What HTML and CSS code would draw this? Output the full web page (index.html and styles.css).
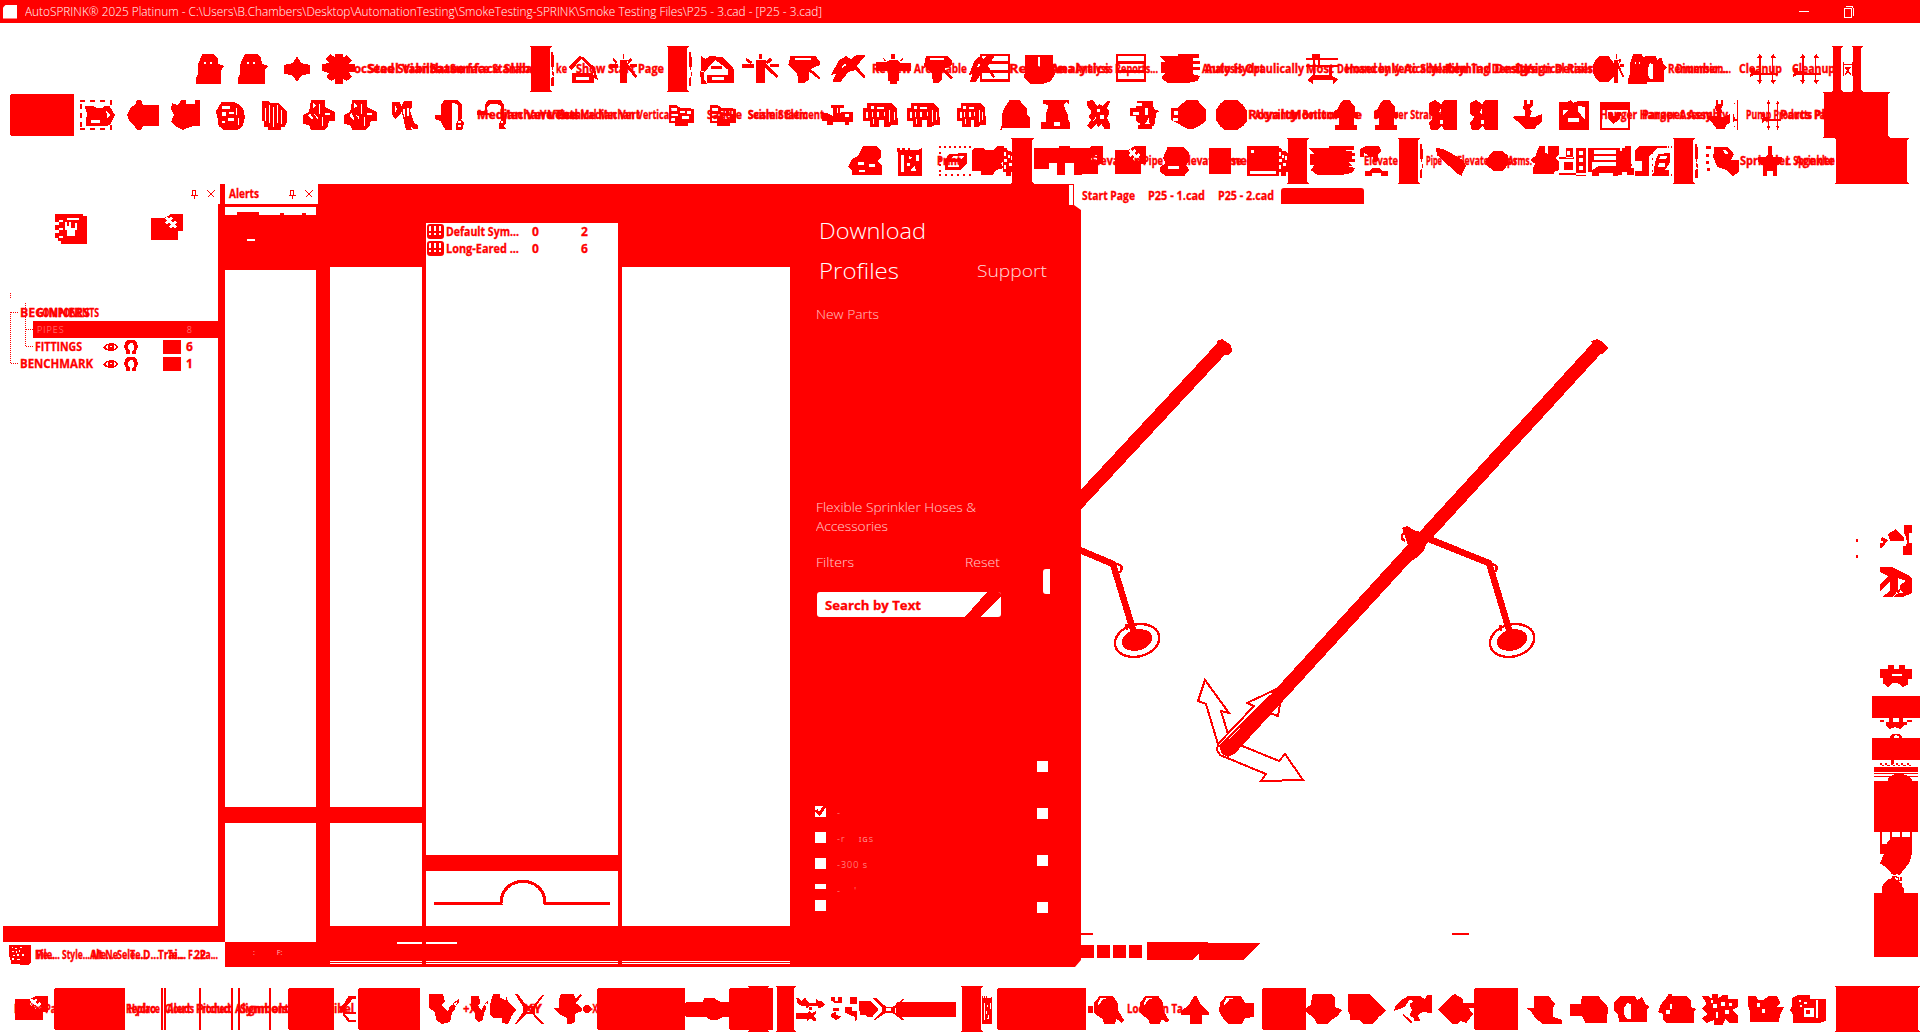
FILE: index.html
```html
<!DOCTYPE html>
<html lang="en">
<head>
<meta charset="utf-8">
<title>AutoSPRINK</title>
<link rel="stylesheet" href="styles.css">
</head>
<body>
<header class="titlebar">
  <span class="app-icon"></span>
  <span class="app-title" data-fit="797">AutoSPRINK® 2025 Platinum - C:\Users\B.Chambers\Desktop\AutomationTesting\SmokeTesting-SPRINK\Smoke Testing Files\P25 - 3.cad - [P25 - 3.cad]</span>
  <svg class="win" width="60" height="14" viewBox="0 0 60 14"><path d="M0 6.500h10M47 1.500h6l1.500 2v7M45.500 4.500q0-1 1-1h5q1 0 1 1v7q0 1-1 1h-5q-1 0-1-1z"/></svg>
</header>
<div class="menu-space"></div>
<div class="toolbar" id="row1"></div>
<div class="toolbar" id="row2"></div>
<div class="toolbar" id="row3"></div>

<main class="work">
  <section class="layers">
    <div class="caption"><svg width="26" height="10" viewBox="0 0 26 10"><path class="line" d="M2.500 1v5M5.500 1v5M2 1.500h4M1 6.500h7M4.500 7v3M17.500 1.500l7 7M24.500 1.500l-7 7"/></svg></div>
    <div class="layer-tools" id="layerTools"></div>
    <div class="tree">
      <svg class="tree-lines" width="34" height="78" viewBox="0 0 34 78"><path class="dots" d="M10.500 0v5M10.500 19v51M11 19.500h8M11 70.500h8M25.500 10v44M26 36.500h8M26 53.500h8"/></svg>
      <div class="tree-rows">
        <div class="node root"><span class="stack"><b data-fit="70">BEGINNERS</b><b data-fit="62">COMPONENTS</b></span></div>
        <div class="node picked"><i>PIPES</i><i class="count">8</i></div>
        <div class="node leaf"><b data-fit="47">FITTINGS</b><span class="marks"></span><span class="swatch"></span><b>6</b></div>
        <div class="node root"><b data-fit="73">BENCHMARK</b><span class="marks"></span><span class="swatch"></span><b>1</b></div>
      </div>
    </div>
    <div class="layers-foot"></div>
    <div class="filters" id="filters"></div>
  </section>

  <section class="dock">
    <div class="alerts">
      <div class="alerts-head"><b data-fit="30">Alerts</b><svg width="26" height="10" viewBox="0 0 26 10"><path class="line" d="M2.500 1v5M5.500 1v5M2 1.500h4M1 6.500h7M4.500 7v3M17.500 1.500l7 7M24.500 1.500l-7 7"/></svg></div>
      <div class="alerts-line"></div>
      <div class="alerts-tools"></div>
      <div class="cell alerts-list"></div>
      <div class="cell alerts-detail"></div>
      <div class="tiny"><i>:</i><i>F:</i></div>
    </div>
    <div class="middle">
      <div class="cols">
        <div class="col first"><div class="cell top"></div><div class="cell grow"></div></div>
        <div class="col symbols">
          <div class="cell list">
            <div class="sym"><span class="sym-icon"></span><b data-fit="73">Default Sym...</b><b class="a">0</b><b>2</b></div>
            <div class="sym"><span class="sym-icon"></span><b data-fit="73">Long-Eared ...</b><b class="a">0</b><b>6</b></div>
          </div>
          <div class="cell grow"><svg width="192" height="55" viewBox="0 0 192 55"><path class="arc" d="M8 32.500H75C75 3 119 3 119 32.500H184"/></svg></div>
        </div>
        <div class="col last"><div class="cell grow"></div></div>
      </div>
      <div class="strip"><span class="dash"></span><span class="rule"></span><span class="rule"></span></div>
    </div>
    <div class="parts">
      <div class="tab-edge"></div>
      <h1 data-fit="107">Download</h1>
      <div class="split"><h1 data-fit="80">Profiles</h1><h2 data-fit="70">Support</h2></div>
      <p class="new" data-fit="63">New Parts</p>
      <p class="hoses"><span data-fit="160">Flexible Sprinkler Hoses &amp;</span><span data-fit="72">Accessories</span></p>
      <div class="filter-head"><span data-fit="38">Filters</span><span data-fit="35">Reset</span><span class="thumb"></span></div>
      <div class="search"><b data-fit="96">Search by Text</b><svg width="36" height="25" viewBox="0 0 36 25"><path d="M22 0h14v4L16 25H0z"/></svg></div>
      <div class="checks">
        <div class="left">
          <label><span class="box"><svg width="11" height="11" viewBox="0 0 11 11"><path class="tick" d="M1 4l3.500 4L10 0"/></svg></span><i>-</i></label>
          <label><span class="box"></span><i>-r&nbsp; &nbsp; ɪɢs</i></label>
          <label><span class="box"></span><i>-300 s</i></label>
          <label class="short"><span class="box"></span><i>-&nbsp; &nbsp; '</i></label>
          <label><span class="box"></span></label>
        </div>
        <div class="right"><span class="box"></span><span class="box"></span><span class="box"></span><span class="box"></span></div>
      </div>
    </div>
  </section>

  <section class="view">
    <nav class="tabs"><b data-fit="53">Start Page</b><b data-fit="57">P25 - 1.cad</b><b data-fit="56">P25 - 2.cad</b><span class="current"></span></nav>
    <div class="canvas">
      <svg width="791" height="779" viewBox="1081 207 791 779">
        <g class="pipe"><path d="M1222 348L1060 522M1597 348L1229 750"/></g>
        <path d="M1217 341l5-2 9 6 1 6-4 4-9-1zM1591 341l6-2 6 3 5 6-6 6-7-2zM1402 528l5-2 9 5 6 1 8 4-6 14-8 8-8 5-6-4 6-8 0-6z"/>
        <g class="branch"><path d="M1075 548L1113 564L1134 633M1424 537L1489 563L1510 633"/></g>
        <path class="line2" d="M1115 564q6 0 7 4l-2 5M1490 564q6 0 7 4l-2 4M1404 533q-5 5 1 8M1127 624q-2 3 1 6M1501 625q-2 3 1 6"/>
        <ellipse cx="1137" cy="640" rx="15.500" ry="10.500" transform="rotate(-14 1137 640)"/>
        <ellipse cx="1512" cy="640" rx="15.500" ry="10.500" transform="rotate(-14 1512 640)"/>
        <ellipse class="line2" cx="1137" cy="640.500" rx="22.500" ry="16" transform="rotate(-14 1137 640)"/>
        <ellipse class="line2" cx="1512" cy="640.500" rx="22.500" ry="16" transform="rotate(-14 1512 640)"/>
        <path class="line1" d="M1228 734L1221 711 1229 713 1205 680 1198 701 1206 704 1218 744 1254 706 1247 703 1283 686 1278 716 1270 713 1240 745 1279 761 1285 754 1303 780 1261 781 1266 774 1220 755 1217 750 1218 744M1222 744l48-48M1236 746l30-30"/>
        <path d="M1219 745l6-6h12v10l-3 5-6 3-6-3z"/>
        <path d="M1081 933h12v2h-12zM1452 933h17v2h-17zM1856 539h2v3h-2zM1856 555h2v3h-2z"/>
        <path d="M1081 945h13v13h-13zM1097 945h13v13h-13zM1113 945h13v13h-13zM1129 945h13v13h-13zM1147 942h61v1h52l-16 17h-45v-7l-6 7h-46z"/>
      </svg>
      <aside class="rail" id="rail"></aside>
    </div>
  </section>
</main>
<div class="toolbar" id="row4"></div>
<script src="app.js"></script>
</body>
</html>
```
FILE: styles.css
```css
* { box-sizing: border-box; }
body {
  margin: 0; width: 1920px; height: 1032px; overflow: hidden;
  background: #fff; color: #f00;
  font: 12px/14px "Open Sans", "Noto Sans", sans-serif;
  display: flex; flex-direction: column;
}
svg { display: block; flex: none; fill: #f00; shape-rendering: crispEdges; overflow: visible; }
svg text { font-family: "Open Sans", "Noto Sans", sans-serif; stroke: #f00; stroke-width: .4; }
i { font-style: normal; }
b { font-weight: 700; -webkit-text-stroke: .3px #f00; }
h1, h2, p { margin: 0; font-weight: 300; }
[data-fit] { white-space: nowrap; flex: none; display: block; transform-origin: 0 50%; }

.titlebar { height: 23px; background: #f00; display: flex; align-items: center; flex: none; color: #fff; }
.app-icon { width: 14px; height: 14px; background: #fff; margin: 0 8px 0 3px; clip-path: polygon(3px 0, 100% 0, 100% 100%, 0 100%, 0 3px); }
.app-title { font-weight: 300; font-size: 12px; }
.win { margin-left: auto; margin-right: 61px; }
.win path { fill: none; stroke: #fff; }
.menu-space { height: 23px; flex: none; }
.toolbar { height: 46px; display: flex; align-items: center; flex: none; }
.toolbar > *, .rail > *, .layer-tools > *, .filters > * { flex: none; }

.work { height: 802px; display: flex; flex: none; }
.layers { width: 218px; display: flex; flex-direction: column; flex: none; }
.caption { height: 20px; padding: 5px 0 0 190px; }
.line { fill: none; stroke: #f00; stroke-width: 1.3; }
.layer-tools { height: 60px; margin-top: 10px; display: flex; align-items: flex-start; }
.tree { display: flex; margin-top: 19px; height: 90px; }
.tree-lines { margin-right: -34px; }
.dots { fill: none; stroke: #f00; stroke-dasharray: 1 1; }
.tree-rows { padding-top: 11px; width: 218px; flex: none; }
.node { height: 17px; display: flex; align-items: center; }
.node.root { padding-left: 20px; }
.node.leaf { padding-left: 35px; }
.node.picked { margin-left: 33px; width: 187px; background: #f00; color: #fff; font-weight: 300; padding: 0 27px 0 4px; justify-content: space-between; font-size: 9px; letter-spacing: 1px; }
.node.picked i { opacity: .55; }
.stack { display: grid; }
.stack b { grid-area: 1 / 1; }
.stack b + b { margin-left: 17px; }
.marks { display: flex; margin-left: auto; width: 36px; gap: 5px; margin-right: 24px; }
.swatch { width: 18px; height: 14px; background: #f00; margin-right: 5px; }
.node b:last-child:not([data-fit]) { width: 32px; }
.layers-foot { height: 16px; margin: 543px 0 0 3px; background: #f00; }
.filters { height: 25px; display: flex; align-items: center; }

.dock { width: 863px; height: 783px; background: #f00; display: flex; flex: none; padding-left: 7px; clip-path: polygon(2px 0, 856px 0, 856px 21px, 863px 26px, 863px 776px, 857px 783px, 7px 783px, 7px 758px, 0 758px, 0 20px, 2px 20px); }
.cell { background: #fff; }
.alerts { width: 91px; flex: none; display: flex; flex-direction: column; }
.alerts-head { height: 20px; width: 93px; background: #fff; display: flex; align-items: center; padding-left: 4px; gap: 29px; }
.alerts-line { height: 8px; background: #fff; margin-top: 3px; clip-path: polygon(0 0, 100% 0, 100% 100%, 81px 100%, 81px 6px, 77px 6px, 77px 100%, 59px 100%, 59px 6px, 55px 6px, 55px 100%, 34px 100%, 34px 5px, 12px 5px, 12px 100%, 0 100%); }
.alerts-tools { height: 55px; padding: 24px 0 0 22px; }
.alerts-tools::before { content: ""; display: block; width: 8px; height: 2px; background: #fff; }
.alerts-list { height: 537px; }
.alerts-detail { height: 119px; margin-top: 16px; }
.tiny { color: #fff; font-size: 7px; display: flex; gap: 22px; padding: 4px 0 0 28px; height: 20px; opacity: .7; }
.middle { width: 460px; margin-left: 14px; flex: none; }
.cols { height: 742px; display: flex; gap: 4px; }
.col { display: flex; flex-direction: column; gap: 16px; }
.grow { flex: 1; }
.first { width: 92px; padding-top: 83px; }
.first .top { height: 540px; }
.symbols { width: 192px; padding-top: 39px; }
.list { height: 632px; }
.last { width: 168px; padding-top: 83px; }
.sym { display: flex; height: 17px; align-items: center; padding-left: 1px; }
.sym .a { margin-left: 13px; width: 49px; }
.sym-icon { width: 17px; height: 15px; border: 2px solid #f00; border-radius: 3px; margin-right: 2px; background: linear-gradient(#f00, #f00) 0 5px / 100% 2px no-repeat, linear-gradient(#f00, #f00) 0 9px / 100% 2px no-repeat, repeating-linear-gradient(90deg, #fff 0 2px, #f00 2px 5px); }
.arc { fill: none; stroke: #f00; stroke-width: 3; }
.strip { padding-top: 16px; display: flex; flex-direction: column; height: 41px; }
.dash { width: 60px; height: 2px; background: linear-gradient(90deg, #fff 25px, #f00 25px 29px, #fff 29px); margin: 0 0 17px 67px; }
.rule { height: 1px; margin-bottom: 1px; background: linear-gradient(90deg, #fff 92px, #f00 92px 96px, #fff 96px 288px, #f00 288px 292px, #fff 292px); }
.parts { width: 291px; flex: none; color: #fff; padding-left: 26px; display: flex; flex-direction: column; align-items: flex-start; }
.tab-edge { width: 4px; height: 20px; background: #fff; margin: 1px 0 0 253px; }
.parts h1 { font-size: 22px; line-height: 24px; margin: 13px 0 0 3px; }
.split { display: flex; justify-content: space-between; width: 231px; margin-top: 3px; align-items: center; }
.split h2 { font-size: 17px; margin-top: 14px; opacity: .85; line-height: 20px; }
.new { font-size: 12px; margin-top: 26px; opacity: .75; }
.hoses { margin-top: 176px; line-height: 19px; opacity: .8; font-size: 12px; }
.filter-head { display: flex; width: 234px; height: 25px; margin-top: 20px; align-items: flex-start; justify-content: space-between; font-weight: 300; }
.filter-head span { opacity: .8; }
.filter-head span:nth-child(2) { margin-left: 67px; }
.filter-head .thumb { width: 7px; height: 25px; margin-top: 13px; background: #fff; border-radius: 3px 0 0 3px; opacity: 1; }
.search { background: #fff; color: #f00; width: 184px; height: 25px; margin: 11px 0 0 1px; border-radius: 3px; display: flex; align-items: center; justify-content: space-between; padding-left: 8px; overflow: hidden; font-size: 13px; }
.checks { display: flex; justify-content: space-between; width: 233px; margin-left: -1px; }
.box { width: 11px; height: 11px; background: #fff; display: block; flex: none; }
.left { padding-top: 189px; }
.left label { height: 26px; display: flex; align-items: flex-start; gap: 11px; font-size: 9px; font-weight: 300; letter-spacing: 1px; line-height: 14px; }
.left i { opacity: .7; }
.left .short { height: 16px; }
.short .box { height: 5px; }
.right { padding-top: 144px; display: flex; flex-direction: column; gap: 36px; }
.tick { fill: none; stroke: #f00; stroke-width: 3; }

.view { flex: 1; }
.tabs { height: 23px; display: flex; align-items: center; gap: 13px; padding-left: 1px; }
.tabs .current { width: 83px; height: 16px; margin-left: -6px; background: #f00; border-radius: 3px 3px 0 0; }
.canvas { display: flex; }
.canvas > svg { overflow: hidden; }
.pipe path { stroke: #f00; stroke-width: 13.5; fill: none; }
.branch path { stroke: #f00; stroke-width: 6.5; fill: none; }
.line2 { fill: none; stroke: #f00; stroke-width: 2.4; }
.line1 { fill: none; stroke: #f00; stroke-width: 2; }
.rail { width: 48px; height: 779px; display: flex; flex-direction: column; }
```
FILE: app.js
```js
// Glyphs are drawn on a 32 x 30 grid and stretched to the width of their slot.
const shapes = {
  ghost: 'M9 0h12l4 4 1 6 6 2-3 4v14H2v-6l2-4V11l3-7zM11 8h2v2h-2zM17 8h2v2h-2z',
  diamond: 'M16 2l5 7 11 2v9l-10 1-6 7-6-7-10-1v-9l11-2z',
  gear: 'M13 0h7v4l4-3 5 5-3 4h6v8h-6l3 5-5 4-4-2v5h-7v-5l-4 2-5-4 3-4-7-2v-7l7-1-4-4 5-5 4 3z',
  home: 'M0 13L12 2l4 1 12 10 4 13-4-2-2-8-12-11L4 16zM4 19h24v10H4zM8 23v3h14v-3z',
  wand: 'M15 0h2v5h-2zM4 4l5 4-2 2-4-4zM24 4l3 2-5 4-2-2zM0 10h10v4H0zM12 6h9v4l11 12-2 2-10-10v15h-8V12zM24 10h8v3h-8z',
  tent: 'M1 2l4 3 4-3 12 1 10 12v14h-5V16L14 6 4 18h-3zM6 21h20v8H6zM11 23v3h11v-3zM10 12h10v3H10zM0 17h4v9l3 4H1z',
  funnel: 'M4 2h22l4 5v4l-8 4 9 9-2 1-9-8v9l-4 3h-5l-1-9-8-9zM8 4v2h14V4z',
  bolt: 'M8 6l6-4 4 3 5-4h8l-8 11 8 11-2 1-7-8-6 2-7 10H2l3-8-4 1 4-9zM12 10l-2 4 5-3z',
  tee: 'M14 0h3v5h-3zM6 3l4 4H8zM25 3l-3 4 2 0zM0 8h10l2-2h8l2 3h10v8H21v10h-2v3h-6v-3h-2V17H0z',
  table: 'M0 0h32v28H0zM2 2v5h28V2zM2 10v6h28v-6zM2 19v6h28v-6z',
  cloud: 'M2 1h28v13l2 6-4 7-8 3H7l-6-6 1-8zM15 3h2v10h-2z',
  squares: 'M0 2h14V0h17v4h-5v3h6v3h-6v3h6v3h-6v4l6 2-2 5-8 2H6l-5-5 3-5H1V8h3z',
  grid: 'M0 4h6V0h8v4h18v2H14v5h18v2H26v9l6 3-5 5v-4H7v4l-6-4 6-5v-8H0v-2h7V6H0zM9 6v5h3V6zM9 13v8h14v-8z',
  arrows: 'M10 0l3 4h-2v15h12V4h-2l3-4 3 4h-3v15h5v2h-5v5h3l-3 4-3-4h2v-5H11v5h2l-3 4-3-4h2v-5H4l-4 2 1-6h8V4H7zM0 14h5v3H0z',
  side: 'M0 0h8l4 5v8H7v3H3v-3H0zM3 17h3v3H3zM7 18h5v3H7zM3 22h8v8H0v-4z',
  hour: 'M0 0h4v30H0zM28 0h4v30h-4zM4 5h24v2H4zM4 10h24L18 18l10 10h-4l-8-6-8 6H4l8-10z',
  dashbox: 'M0 0h5v2H0zM9 0h5v2H9zM18 0h5v2h-5zM27 0h2v5h-2zM0 4h2v5H0zM0 13h2v5H0zM0 22h2v5H0zM0 28h5v2H0zM9 28h5v2H9zM18 28h5v2h-5zM27 25h2v5h-2zM4 6h8l3 2h5l3-2h4l5 9-4 9-3 2H6l-1-7 2-4zM10 20v3h8v-3zM24 11l4 4-3 3z',
  valve: 'M10 0h4l2 5h16v21H16l-2 4h-4l-3-5-4-3-3-7 4-8 4-2z',
  valve2: 'M2 3l6 2 4-5h4l1 4h9V0h5v26h-6l-4 1-8 3-6-3-6-5 3-7-3-6z',
  stripes: 'M0 1h8l3 2h10l6 5 5 4v10l-3 5h-5v3H8v-3H2v-6H0zM4 8v13h1V8zM9 5v18h1V5zM14 7v20h1V7zM19 5v18h1V5zM24 10v14h1V10z',
  relief: 'M6 2h14l6 3 4 4 2 8-3 10-6 3H9l-6-4-1-6-2-9zM7 6v3h8V6zM7 12v4h4v-4zM14 12v2h6v-2zM22 8v7h1V8zM13 18v3h7v-3zM7 21v2h3v-2zM24 18v7h1v-7z',
  arch: 'M4 1h22l5 6 1 20h-6l-2 2h-5v-8h-4v8H6V22H0V7h4zM7 5v3h3V5zM13 6v2h6V6zM3 11v7h2v-7zM8 12v5h1v-5zM13 12v5h2v-5zM19 11v5h1v-5zM24 9v14h1V9zM28 11v10h1V11zM9 20v5h1v-5z',
  cross: 'M8 0h14v7l4 2 6 3v9h-6l-1 5-4 4H8l-2-5-6-1v-9l6-3zM10 3v5l3-2zM16 4v10h1V4zM22 13h5v2h-5zM5 15l4 5 1-2-3-5zM20 17v9h-1v-9zM11 14l4 6v-3z',
  sheaf: 'M0 2h9l3 4 3-5h10v6l-3 3 3 7 2 6 5 2v4h-6l-3-3v3l3 1h-9l-3-12-2-6-4 4-3 3-3-2-2-3zM4 6v6l3-3zM13 9v3l3 6V9zM19 8v8h2V8z',
  hook: 'M6 5l4-5h14l5 5v14h-2l4 4-2 7h-7v-6l3-4-1-15-3-2h-3v27h-7l-5-9-6-2v-4h6zM24 21v2h4v-2zM24 25v2h4v-2z',
  hook2: 'M8 5l4-5h13l4 5v14h2v5l-3 1 3 4h-7l-1-5 3-4V7l-4-3h-7l-4 3v6l6 2H0v-4h8zM26 21v2h2v-2z',
  lever: 'M0 2h10l4 3h8l10 2v19h-8v4H8v-4H0zM3 6v4h7V6zM3 13v3h9v-3zM3 19v4h5v-4zM14 9v3h6V9zM23 10v4h5v-4zM16 17v3h9v-3z',
  base: 'M9 3h14v3h-4v6l6-1h7v13h-4v3h-4v-3H11v3H5v-4H0V13h6l5 3V6H9zM15 6v7h2V6zM24 14v3h4v-3z',
  dome: 'M11 0h10l8 9v5l3 4v10H3v2H1l2-5V15l2-6z',
  dome2: 'M2 0h28v4l-3-2-3 3 5 11v4l2 3v6H0v-7h5v-7l3-9-4-2H2zM14 22v4h6v-4z',
  disc: 'M9 0h13l6 5 4 6v10l-4 5-6 4H9l-5-4-4-6V10l4-6z',
  disc2: 'M14 0h10l4 5 4 4v12l-6 5-6 3h-4l-6-3-4-3-6-3v-7H0V8h6zM3 11v4h3v-4zM2 18v3h4v-3z',
  x: 'M1 1l7-1 5 6 3-2 4 2 5-5 4 0-4 7 3 4-3 6 4 7-1 4h-6l-4-5-3 3-3-3-6 5-5-3 5-6-3-4 4-4-5-5zM13 9v3h3V9zM17 15v4h4v-4zM11 17l-3 5 5-4z',
  pump: 'M7 1h17v5l3 4 5 1-4 2-2 12-3 2v2H8v-3l4-2-6-3v-5H0v-8h6V6h7V3H7zM3 12v3h7v-3zM16 8v7h3V8zM20 18l-4 6h5z',
  hydrant: 'M12 0h9l3 4 4 3v5l4 1v5h-5v7h3v5H1v-5h6v-7H0v-7l5-2 2-4z',
  flags: 'M0 3l7-3 7 4 3-4h15v30H18l-4-4-4 4H2l-2-7 5-6-5-3zM14 8l-3 4 3 3zM12 20v4h4v-4z',
  boat: 'M12 0h3v4h3V0h3v6l-3 3 2 2-2 6h5l8-3v8l-6 4-2 3H13l-6-6-4-3-3-3 3-1h10v-5l-3-3 2-3z',
  picture: 'M0 2h9l3-2 3 3 5-2h12v29H0zM4 10v6l6-6zM20 6v5l8 9V7zM10 18v4h11v-4z',
  frame: 'M0 2h32v28H0zM2 10v18h28V10zM8 12h4l3 5 4-5h3v4l-3 5-5 3-4-4z',
  camera: 'M12 0h13l5 4v8l-4 3 5 5v9H1v-4l-4-4 4-8 6-3zM7 16v3h6v-3zM18 18v3h6v-3zM8 24v2h6v-2z',
  sheet: 'M0 2h3v2h3V2h3v2h3V2h3v2h9l5-2v28H1V8zM5 9v17h3V9zM14 10v3l4-1zM22 9v6h3V9zM11 17v3h4v-3zM20 20l-5 5h7z',
  dots: 'M0 0h2v2H0zM5 0h2v2H5zM10 0h2v2h-2zM15 0h2v2h-2zM20 0h2v2h-2zM25 0h2v2h-2zM30 0h2v2h-2zM0 6h2v2H0zM0 12h2v2H0zM0 18h2v2H0zM0 24h2v2H0zM0 28h2v2H0zM6 28h2v2H6zM12 28h2v2h-2zM18 28h2v2h-2zM24 28h2v2h-2zM30 28h2v2h-2zM10 8l18-1v10l-7 7H6V14zM9 16v5h11v-5zM14 10l-3 3h11l3-3z',
  block: 'M2 2h9l3 2h8l3-4h7v14l-3 3 3 5-8 2-3 5H9v-4H0V4z',
  roof: 'M0 2h12V0h5v2h15v6l-6 3v6l-3 3v9h-4V17h-4v12h-4V17H7v6H0z',
  hatch: 'M0 4h14L20 0h12v18h-5v10H0zM16 3l2 2 2-2 2 2-2 2 2 2 2-2 2 2-2 2 2 2-2 2-2-2-2 2-2-2 2-2-2-2-2 2-2-2 2-2-2-2z',
  hex: 'M9 1h16l6 5v9l-3 4 3 5-5 6H7l-6-4v-5l6-4-3-5zM9 20v3h12v-3z',
  rect: 'M0 2h32v26H0z',
  full: 'M0 0h32v30H0z',
  open: 'M0 0h32v30H0zM4 4v3h3V4zM3 25v3h26v-3z',
  mushroom: 'M0 3l6-3h14l3 5-4 4v6h-5v-4H9V9L4 7v4H0zM5 25h5l3-3h8l3 3h6v5h-8v-3h-9v3H5z',
  pencil: 'M0 2l8 1 21 11 3 6-5 10-5-3L1 9z',
  orb: 'M8 4l4-3h12l8 7v12l-7 8H10l-6-5-4-3v-7z',
  tree: 'M10 0h6v6l4 2V0h12v8l-4 4 4 4v8l-6 2v2H3v-6l3-4-6-4 6-4z',
  seats: 'M20 2h12v28H20zM24 5v4h4V5zM24 12v4h4v-4zM24 20v4h4v-4zM8 2h8v10H8zM10 5v4h3V5zM0 11h18v2H0zM6 16h10v8H6zM0 27h32v2H0z',
  chart: 'M0 2h23v3h4V0h4v14l1 6h-4v6h-6v4h-4v-3H8v3H3v-4H0zM4 4v4h16V4zM4 10v4h16v-4zM3 16v8l5-4h12v-4z',
  lettera: 'M9 2h8l10 20h5v7H18v-7h-8l-2 7H0v-7h4zM12 12v4h3z',
  quarter: 'M4 0h24v2h-8l-8 9v19H0v-5h6V15H0V4zM18 15h12v2h-8l-4 7h12v6H16z',
  coil: 'M0 0h5v3H0zM8 1h13l6 7-3 6h8v12l-6 4-6-6-9-3-4-10zM16 4l3 4h3l-3-4zM0 8h3v3H0zM0 15h3v3H0zM1 22h3v3H1z',
  star: 'M14 0h5v9l2 2h11v5l-7 4v10h-5v-5h-8v5H7V20l-7-4v-5h9l4-2z',
  key: 'M2 0h14l2 8-4 3 7 6 2-5 7-4-2 7-3 4-2 9-8 2-6-4-1-8-6-4zM26 9l6-4v3l-4 4z',
  kite: 'M6 0h8v4l6 2V0l3 8 9 8-5 6-4 8-7-1v-5H6l-4-4V11z',
  scissors: 'M0 0h3l10 12h7L30 1h2L22 14v6l10 10h-3L19 20h-6L2 30H0l9-12v-5zM13 14v4h5v-4z',
  pin: 'M8 0h14l3 5 5-5 2 1-7 8 7 5v3l-8 3v8l-5 2h-4v-6l-9-4-6-6h6V5z',
  sparks: 'M0 1h4v5h4V1h5v7H4L0 5zM22 1h8v8h-8zM2 14h7v3H2zM0 21l6-3v4l6 2-6 4-6-4zM16 13h8v4h6v10l-3 3v-6l-5-2-6-3z',
  bird: 'M7 0h12l4 4 6 2-5 5 8 4-5 6v6l-5 3h-8l-5-5-9-4 4-10z',
  arrowup: 'M15 2h3l5 9 9 7v3h-8v9H10v-9H0v-4l9-6z',
  lens: 'M6 2h14l5 6 1 9 6 9-2 3-6-4-2 5H11l-2-5-5-3-4-3V9zM7 4L4 10l1 1 5-6 6-1z',
  lens2: 'M6 2h14l4 7h8v14l-8 1-3 6H9l-5-5-4-8 1-8zM7 4L4 10l1 1 5-6 6-1z',
  shieldl: 'M6 0h17l3 4v9l6 3-4 6-4 3-5 5h-9l-3-6-7-6V14l4-3z',
  shieldr: 'M0 0h18l5 6 9 11-6 6-5 7h-8l-3-4H2v-4l-2-5z',
  twist: 'M6 6l6-4h10l4 3 2-4h4v18l-8-1-4 3 2 6h-5v-3l-4-2 2-6-2-6 4-3-4-1-4 7-9 4 1-5zM8 20l8 8-2 1-7-8z',
  back: 'M12 2l3-2 3 2 4 3v4h10v5h-5l4 6-6 9-5-2-3 3h-4l-5-5-8-10 8-9z',
  wedge: 'M7 2h13l6 8-2 4v9l8 3v4H15L8 24l-3-6-5-4h7z',
  block2: 'M10 2h14l3 5 5 6-1 16H13l-3-7H0V10h9z',
  ring: 'M6 2h12l3 4 4-3 3 7 4 3-3 3v12H5l-2-8-3-3V9zM12 9l-3 5v7l3 4h3V10z',
  ringsolid: 'M8 2V0h4v2h12l4 5v6l4 2-2 3v11H7l-3-4v-5l-4-2 2-7zM10 10v5h2v-5zM7 16v4h3v-4z',
  noise: 'M0 2h6l3 3V0h5v5l4-4h5v4h9v8l-5 3 5 5v8h-8l-3-4-3 6h-7v-5l-7 3-4-5 5-4-5-6 4-4zM10 10v4h3v-4zM17 8v4h3V8zM12 18v6h2v-6zM20 16v4h4v-4zM8 6v3h2V6zM24 9v3h3V9z',
  hazard: 'M2 0h30v27l-4 3H18l-3-2H4v-4l-2-6zM5 3v2h2V3zM10 4v2h2V4zM16 3v1h4V3zM6 9v2h2V9zM11 9v3h1V9zM15 8v2h2V8zM7 15v1h3v-1zM13 14v3h2v-3zM5 20v2h4v-2zM12 21v1h5v-1zM20 14v2h2v-2z',
  spark: 'M0 2h3l3 4 4-5 2 4 3 3h7V3l3 3h3l4 4-5 4h-3v-3h-8l-4 3-2-3H6l-4-2zM0 20h12l3-3 3 3 4-3v3l-3 3 3 3v3h-3l-3-3-3 3-2-3H0zM14 13h4v3h-4z',
  plug: 'M0 2h7l2 4h5l4-4h8l3 7-4 4h7l-3 7-2 8H2V18l-2-6zM8 9v4h3V9zM12 15v4h3v-4z',
  qr: 'M2 4l5-3h11v4h14v22l-6 2H3v-8l-3-5 2-5zM8 6v2h2V6zM12 8v2h3V8zM9 11v2h2v-2zM12 14v9h9v-9zM14 16h4v4h-4zM23 6v18h2V6z',
  stamp: 'M0 0h28v2h4v28H6v-3H3v-3H0v-5h4v-3H0v-5h4V8H0zM4 6v2h4V6zM4 14v2h4v-2zM4 22v2h4v-2zM12 4v2h12V4zM10 8v8h2v6h8v-6h2V9h-2v5h-4V8h-2v4h-2V8z',
  sidebits: 'M0 16h3v2H0zM2 12l6 3-6 8H0v-5zM8 9l8-5 8 9v3H10zM24 0h8v8h-3v10h3v12h-9v-9h3l1-4-2-8h-1z',
  leaves: 'M0 0h12l16 8 4 4v14l-9 4H12l8-5V18l6-4-8-3v12l-4 7H2l8-6V14L0 24v-7l8-8-8-4zM19 22l-3 4h7z',
  crawler: 'M0 5h8V0h6v6h5V0h6v5h7v14h-4v8l-5 3-5-5h-6l-4 5-5-5V18H0zM12 12v3h10v-3z',
  feet: 'M0 8h4v4H0zM9 0h4v12h6V0h4v12h4v9h-3l-4 9-5-5-6 5-3-8V12h3zM27 8h5v4h-5z',
  dotrow: 'M0 0h2v15h2v15H2V15H0zM5 0h2v15h2v15H7V15H5zM10 0h2v15h2v15h-2V15h-2zM15 0h2v15h2v15h-2V15h-2zM20 0h2v15h2v15h-2V15h-2zM25 0h2v15h2v15h-2V15h-2z',
  bucket: 'M0 0h2v11h4l4-4V0h2v5h8V0h2v5h8V0h2v19l-3 8-4 4-5 5H12l-5-5-7-4 4-8H0z',
  eye: 'M0 15L6 8l8-5h5l8 5 5 7-6 8-8 5h-5l-8-5zM9 9l-5 6 5 7zM22 9v13l6-7zM14 11v3h3v-3z',
  shoe: 'M9 0h14l7 6 2 10-5 7v7h-8v-6l4-5V11l-4-4h-6l-3 4v8l4 5v6H5v-7l-5-7 2-10z',
  paren: 'M14 0h12v4h-6L8 13v5h18v3H8l8 7h10v2H14L4 22v-4H0v-5l6-4z'
};

const draw = (kind, w, h, lead) =>
  `<svg style="margin-left:${lead}px" width="${w}" height="${h}" viewBox="0 0 32 30" preserveAspectRatio="none"><path fill-rule="evenodd" d="${shapes[kind]}"/></svg>`;
const words = (text, w, lead) =>
  `<svg style="margin-left:${lead}px" width="${w}" height="14" viewBox="0 0 ${w} 14"><text x="0" y="11" font-size="12" font-weight="700" textLength="${w}" lengthAdjust="spacingAndGlyphs">${text}</text></svg>`;
const slab = (w, h, lead, notch) => {
  const d = notch ? `M0 0H${w}L${w - 2} 2V${h - 2}L${w} ${h}H0L2 ${h - 2}V2z` : `M1 0H${w - 1}L${w} 1V${h - 1}L${w - 1} ${h}H1L0 ${h - 1}V1z`;
  return `<svg style="margin-left:${lead}px" width="${w}" height="${h}" viewBox="0 0 ${w} ${h}"><path d="${d}"/></svg>`;
};

// Item: [x, width, kind, text or height]
function fill(id, items) {
  let at = 0, out = '';
  for (const [x, w, kind, extra] of items) {
    const lead = x - at;
    if (kind === 'text') out += words(extra, w, lead);
    else if (kind === 'bar') out += slab(w, extra || 46, lead, true);
    else if (kind === 'button') out += slab(w, extra || 42, lead, false);
    else out += draw(kind, w, extra || 30, lead);
    at = x + w;
  }
  document.getElementById(id).innerHTML = out;
}

fill('row1', [
  [194, 30, 'ghost'], [236, 32, 'ghost'], [284, 26, 'diamond'], [322, 33, 'gear'],
  [354, 90, 'text', 'ocSead Stabilba'], [368, 96, 'text', 'Steel Viantbase'], [430, 100, 'text', 'Sateonface Slab'], [450, 82, 'text', 'Surface Stanlba'],
  [529, 23, 'bar'], [551, 8, 'side', 34], [556, 11, 'text', 'ke'], [568, 30, 'home'], [576, 88, 'text', 'Show Start Page'], [610, 27, 'wand'],
  [666, 23, 'bar'], [689, 7, 'side', 34], [700, 35, 'tent'], [742, 37, 'wand'], [786, 36, 'funnel'], [830, 37, 'bolt'],
  [872, 39, 'text', 'Review'], [876, 35, 'tee'], [914, 53, 'text', 'Area Table'], [922, 32, 'funnel'], [968, 28, 'bolt'], [980, 30, 'table'],
  [1009, 56, 'text', 'Remote'], [1023, 32, 'cloud'], [1052, 106, 'text', 'Area Analysis Reports...'], [1050, 60, 'text', 'Analytics'], [1116, 30, 'table'], [1160, 40, 'squares'],
  [1202, 62, 'text', 'Analysis Opt'], [1205, 99, 'text', 'Auto Hydraulically'], [1306, 32, 'grid'], [1306, 28, 'text', 'Most'],
  [1337, 100, 'text', 'Demand by Vertically'], [1345, 120, 'text', 'Hosecenly Ac Scalably'], [1430, 100, 'text', 'Vertical Tag Density'], [1445, 90, 'text', 'Remind Design'], [1515, 78, 'text', 'Design Details'], [1525, 68, 'text', 'Vertical Riser'],
  [1593, 22, 'disc', 26], [1608, 16, 'wand'], [1627, 22, 'ghost'], [1640, 27, 'ring'], [1668, 60, 'text', 'Renumber...'], [1676, 55, 'text', 'Dimension...'],
  [1739, 43, 'text', 'Cleanup'], [1750, 31, 'arrows'], [1792, 43, 'text', 'Cleanup'], [1793, 31, 'arrows'],
  [1831, 12, 'bar'], [1843, 10, 'hour', 14], [1851, 12, 'bar']
]);
fill('row2', [
  [10, 64, 'button'], [80, 35, 'dashbox'], [127, 32, 'valve'], [170, 31, 'valve2'], [216, 29, 'relief'], [262, 25, 'stripes'], [303, 32, 'cross'],
  [344, 33, 'cross'], [392, 26, 'sheaf'], [435, 30, 'hook'], [477, 30, 'hook2'],
  [477, 100, 'text', 'Median Vert Tee'], [500, 80, 'text', 'Mechan Vents'], [540, 100, 'text', 'Vertical Median Vert'], [560, 112, 'text', 'Scenical Mechan Vertical'],
  [669, 25, 'lever', 22], [710, 26, 'lever', 22], [707, 35, 'text', 'Saddle'], [748, 76, 'text', 'Seismic Element'], [748, 60, 'text', 'Scale Static'], [822, 31, 'base', 24],
  [863, 35, 'arch', 26], [907, 33, 'arch', 26], [957, 29, 'arch', 26], [999, 31, 'dome'], [1041, 30, 'dome2'], [1086, 27, 'x'], [1130, 30, 'pump'], [1171, 35, 'disc2'], [1216, 31, 'disc'],
  [1248, 50, 'text', 'Royalty'], [1255, 80, 'text', 'Aluminum Bottom'], [1290, 50, 'text', 'Monitor'], [1334, 24, 'hydrant'], [1340, 22, 'text', 'ive'],
  [1374, 24, 'hydrant'], [1374, 73, 'text', 'Shower Strainer'], [1429, 28, 'flags'], [1470, 28, 'flags'], [1513, 30, 'boat'], [1559, 30, 'picture'], [1600, 30, 'frame'],
  [1600, 128, 'text', 'Hanger Hanger Assembly'], [1642, 70, 'text', 'Parapet Assy'], [1707, 24, 'boat'], [1733, 6, 'arrows'],
  [1746, 79, 'text', 'Pump Products Pa'], [1762, 21, 'arrows'], [1780, 45, 'text', 'Parts Pl'], [1822, 68, 'bar']
]);
fill('row3', [
  [851, 32, 'camera'], [897, 28, 'sheet'], [939, 32, 'dots'], [937, 24, 'text', 'Print'], [972, 32, 'block'], [1003, 11, 'lever'], [1010, 24, 'bar'],
  [1034, 67, 'roof'], [1074, 29, 'hatch'], [1091, 50, 'text', 'Elevation'], [1115, 31, 'hatch'], [1143, 20, 'text', 'Pipe'], [1159, 31, 'hex'], [1182, 60, 'text', 'Elevate Rise'], [1209, 22, 'rect'], [1225, 22, 'text', 'ime'],
  [1247, 32, 'open'], [1278, 10, 'lever'], [1286, 23, 'bar'], [1309, 46, 'squares'], [1318, 34, 'block', 20], [1360, 30, 'mushroom'], [1364, 34, 'text', 'Elevate'],
  [1397, 23, 'bar'], [1420, 7, 'side', 34], [1426, 16, 'text', 'Pipe'], [1436, 30, 'pencil'], [1457, 60, 'text', 'Elevate Drops'], [1486, 22, 'orb', 22], [1508, 24, 'text', 'Arms.'],
  [1530, 29, 'tree'], [1559, 27, 'seats'], [1588, 44, 'chart'], [1618, 16, 'lettera'], [1635, 36, 'quarter'], [1652, 20, 'dots'],
  [1672, 23, 'bar'], [1695, 8, 'side', 34], [1706, 33, 'coil'], [1740, 50, 'text', 'Sprinkler'], [1758, 24, 'star'], [1786, 48, 'text', 'L Sprinkler'], [1795, 40, 'text', 'Agente'], [1834, 75, 'bar']
]);
fill('row4', [
  [15, 33, 'hatch', 26], [14, 42, 'text', 'Device Pa'], [54, 71, 'button'], [126, 34, 'text', 'Replace'], [128, 28, 'text', 'Hydro'], [161, 2, 'full', 42], [164, 2, 'full', 42],
  [165, 29, 'text', 'Clouds'], [167, 24, 'text', 'Alert'], [199, 2, 'full', 42], [196, 36, 'text', 'Product'], [198, 32, 'text', 'Pitched'], [231, 2, 'full', 42], [238, 2, 'full', 42],
  [235, 54, 'text', 'Alignment'], [240, 48, 'text', 'Symbols'], [269, 2, 'full', 42], [288, 46, 'button'], [334, 20, 'text', 'ibel'], [340, 20, 'paren', 26], [358, 62, 'button'],
  [427, 32, 'key'], [463, 14, 'text', '+X'], [470, 18, 'key', 26], [488, 28, 'kite'], [515, 29, 'scissors'], [524, 18, 'text', 'XY'], [554, 28, 'pin'], [583, 8, 'disc', 8], [590, 8, 'text', '-X'],
  [597, 88, 'button'], [685, 45, 'button', 15], [698, 28, 'bird', 22], [729, 44, 'button'], [747, 22, 'bar'], [775, 21, 'bar'], [796, 29, 'spark', 26], [831, 28, 'sparks', 26], [859, 20, 'shieldr', 16], [873, 32, 'scissors', 22],
  [896, 60, 'button', 15], [960, 23, 'bar'], [982, 11, 'sheet'], [997, 89, 'button'], [1088, 5, 'rect', 7], [1094, 30, 'lens'], [1127, 56, 'text', 'Location Ta'], [1140, 29, 'lens'], [1181, 28, 'arrowup'], [1219, 35, 'lens2'], [1262, 44, 'button'],
  [1306, 36, 'shieldl'], [1348, 38, 'shieldr'], [1394, 38, 'twist'], [1438, 36, 'back'], [1474, 44, 'button'], [1526, 36, 'wedge'], [1570, 38, 'block2'], [1614, 36, 'ring'], [1658, 38, 'ringsolid'],
  [1702, 36, 'noise'], [1748, 36, 'plug'], [1790, 36, 'qr'], [1834, 86, 'bar']
]);
fill('layerTools', [[55, 32, 'stamp'], [151, 32, 'hatch', 28]]);
fill('filters', [
  [8, 23, 'hazard', 20], [35, 20, 'text', 'Me...'], [36, 24, 'text', 'File...'], [62, 28, 'text', 'Style...'], [90, 28, 'text', 'Alt Ne'], [92, 22, 'text', 'Me...'], [117, 26, 'text', 'Sele...'],
  [130, 18, 'text', 'Te...'], [143, 16, 'text', 'D...'], [158, 28, 'text', 'Trai...'], [168, 16, 'text', 'Te...'], [188, 30, 'text', 'F...Pa...'], [194, 12, 'text', '22']
]);

document.querySelectorAll('.marks').forEach(el => {
  el.innerHTML = draw('eye', 16, 10, 0).replace('margin-left:0px', 'margin-top:2px') + draw('shoe', 14, 14, 0);
});

// Right-hand rail, item: [y, height, x, width, kind]
let y = 207;
document.getElementById('rail').innerHTML = [
  [525, 30, 8, 32, 'sidebits'], [567, 30, 8, 32, 'leaves'], [665, 22, 8, 32, 'crawler'], [696, 22, 0, 48, 'full'], [717, 12, 8, 32, 'feet'],
  [734, 6, 18, 12, 'shoe'], [738, 22, 0, 48, 'full'], [759, 5, 19, 3, 'full'], [763, 3, 8, 34, 'dotrow'],
  [767, 5, 2, 44, 'full'], [773, 1, 2, 44, 'full'], [776, 1, 2, 44, 'full'], [774, 8, 14, 26, 'dome'], [781, 51, 2, 44, 'full'],
  [831, 36, 8, 32, 'bucket'], [869, 6, 19, 11, 'shoe'], [876, 5, 19, 11, 'qr'], [879, 15, 8, 24, 'dome'], [893, 64, 2, 44, 'full']
].map(([top, h, x, w, kind]) => {
  const html = `<svg style="margin:${top - y}px 0 0 ${x}px" width="${w}" height="${h}" viewBox="0 0 32 30" preserveAspectRatio="none"><path fill-rule="evenodd" d="${shapes[kind]}"/></svg>`;
  y = top + h;
  return html;
}).join('');

document.querySelectorAll('[data-fit]').forEach(el => {
  const want = Number(el.dataset.fit);
  el.style.width = 'max-content';
  const have = el.getBoundingClientRect().width;
  el.style.width = want + 'px';
  el.style.transform = `scaleX(${want / have})`;
});
```
